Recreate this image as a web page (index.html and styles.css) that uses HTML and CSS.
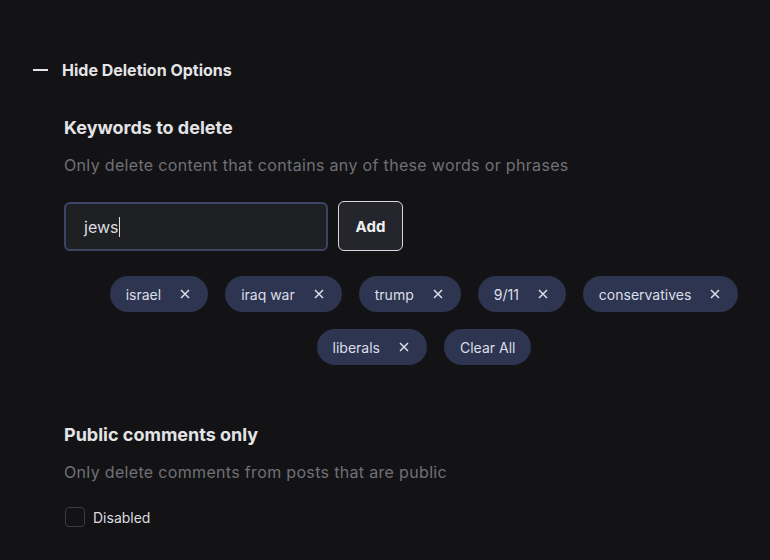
FILE: index.html
```html
<!DOCTYPE html>
<html>
<head>
<meta charset="utf-8">
<link rel="stylesheet" href="styles.css">
</head>
<body>
<div class="page">
  <button class="toggle">
    <span class="minus"></span>
    <span>Hide Deletion Options</span>
  </button>

  <section class="section">
    <h2 class="title">Keywords to delete</h2>
    <p class="desc">Only delete content that contains any of these words or phrases</p>
    <div class="add-row">
      <div class="input"><span>jews</span><span class="caret"></span></div>
      <button class="add">Add</button>
    </div>
    <div class="chips">
      <span class="chip">israel<svg class="x" viewBox="0 0 10 10"><path d="M1 1L9 9M9 1L1 9"/></svg></span>
      <span class="chip">iraq war<svg class="x" viewBox="0 0 10 10"><path d="M1 1L9 9M9 1L1 9"/></svg></span>
      <span class="chip">trump<svg class="x" viewBox="0 0 10 10"><path d="M1 1L9 9M9 1L1 9"/></svg></span>
      <span class="chip">9/11<svg class="x" viewBox="0 0 10 10"><path d="M1 1L9 9M9 1L1 9"/></svg></span>
      <span class="chip">conservatives<svg class="x" viewBox="0 0 10 10"><path d="M1 1L9 9M9 1L1 9"/></svg></span>
      <span class="chip">liberals<svg class="x" viewBox="0 0 10 10"><path d="M1 1L9 9M9 1L1 9"/></svg></span>
      <span class="chip plain">Clear All</span>
    </div>
  </section>

  <section class="section second">
    <h2 class="title">Public comments only</h2>
    <p class="desc">Only delete comments from posts that are public</p>
    <label class="check"><span class="box"></span>Disabled</label>
  </section>
</div>
</body>
</html>
```

FILE: styles.css
```css
html, body {
  margin: 0;
  padding: 0;
  background: #131316;
  overflow: hidden;
}
body {
  font-family: Inter, "Noto Sans", sans-serif;
  color: #e4e4e7;
}
.page {
  padding: 58px 0 0 33px;
  width: 737px;
}
.toggle {
  display: flex;
  align-items: center;
  gap: 14px;
  background: none;
  border: 0;
  padding: 0;
  color: #e4e4e7;
  font-family: inherit;
  font-size: 16px;
  font-weight: 700;
  height: 24px;
}
.minus {
  width: 15px;
  height: 2px;
  background: #e4e4e7;
}
.section {
  margin-left: 31px;
  margin-top: 34px;
}
.title {
  margin: 0;
  font-size: 18px;
  font-weight: 700;
  line-height: 24px;
  color: #e4e4e7;
}
.desc {
  margin: 15px 0 0;
  font-size: 16px;
  line-height: 20px;
  color: #707075;
  letter-spacing: 0.33px;
}
.add-row {
  display: flex;
  gap: 10px;
  margin-top: 27px;
}
.input {
  box-sizing: border-box;
  width: 264px;
  height: 49px;
  border: 2px solid #3c4566;
  border-radius: 6px;
  background: #1f2024;
  display: flex;
  align-items: center;
  padding-left: 18px;
  font-size: 16px;
  color: #dcdce0;
}
.caret {
  width: 1px;
  height: 20px;
  background: #dcdce0;
  margin-left: 1px;
}
.add {
  box-sizing: border-box;
  width: 65px;
  height: 50px;
  margin-top: -1px;
  border: 1px solid #d8d8dc;
  border-radius: 6px;
  background: #25252d;
  color: #f0f0f2;
  font-family: inherit;
  font-size: 15px;
  font-weight: 700;
}
.chips {
  width: 720px;
  display: flex;
  flex-wrap: wrap;
  justify-content: center;
  gap: 17px 17px;
  margin-top: 25px;
}
.chip {
  display: inline-flex;
  align-items: center;
  height: 36px;
  padding: 0 18px 0 16px;
  border-radius: 18px;
  background: #2d3551;
  color: #dcdfe8;
  font-size: 14px;
}
.chip.plain {
  padding: 0 16px;
}
.chip .x {
  width: 10px;
  height: 10px;
  margin-left: 19px;
  fill: none;
  stroke: #dcdfe8;
  stroke-width: 1.5;
}
.second {
  margin-top: 58px;
}
.check {
  display: flex;
  align-items: center;
  gap: 8px;
  margin-top: 25px;
  font-size: 14px;
  color: #dcdce0;
}
.box {
  box-sizing: border-box;
  width: 20px;
  height: 20px;
  border: 1px solid #3a3a40;
  border-radius: 4px;
  margin-left: 1px;
}
```
